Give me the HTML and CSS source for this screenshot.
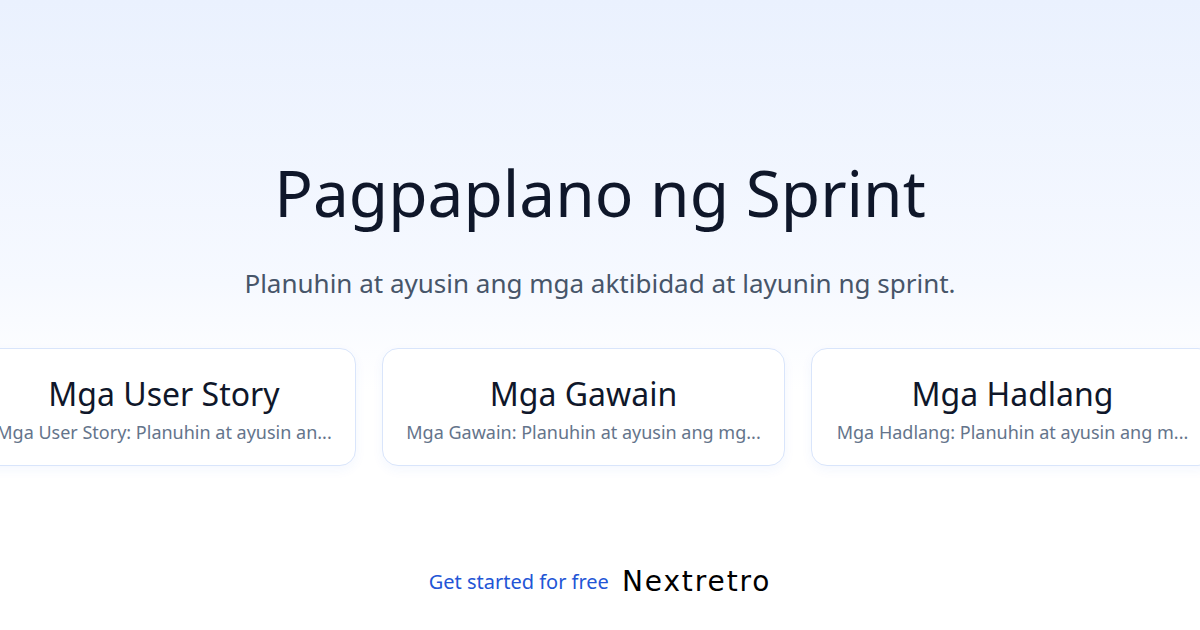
FILE: index.html
```html
<!DOCTYPE html>
<html lang="tl">
<head>
    <meta charset="UTF-8">
    <title>Pagpaplano ng Sprint</title>
    <link rel="stylesheet" href="styles.css">
</head>
<body>
    <div class="page">
        <div class="hero">
            <h1 class="title">Pagpaplano ng Sprint</h1>
            <p class="lead">Planuhin at ayusin ang mga aktibidad at layunin ng sprint.</p>
        </div>

        <div class="cards">
            <div class="card card-first">
                <h2 class="card-title">Mga User Story</h2>
                <p class="card-text">Mga User Story: Planuhin at ayusin an...</p>
            </div>
            <div class="card">
                <h2 class="card-title">Mga Gawain</h2>
                <p class="card-text">Mga Gawain: Planuhin at ayusin ang mg...</p>
            </div>
            <div class="card">
                <h2 class="card-title">Mga Hadlang</h2>
                <p class="card-text">Mga Hadlang: Planuhin at ayusin ang m...</p>
            </div>
        </div>

        <div class="footer">
            <span class="cta">Get started for free</span>
            <span class="brand">Nextretro</span>
        </div>
    </div>
</body>
</html>
```

FILE: styles.css
```css
body{
    margin:0;
    padding:0;
    font-family: "Noto Sans", "Open Sans", sans-serif;
    background-color: #ffffff;
}

.page{
    width:1200px;
    height:630px;
    overflow: hidden;
    background: linear-gradient(180deg, #eaf1fe 0%, #f6f9ff 45%, #ffffff 62%);
    display: flex;
    flex-direction: column;
    align-items: center;
}

.hero{
    padding-top:150px;
    text-align: center;
}
.title{
    margin:0;
    font-size: 64px;
    font-weight: 400;
    line-height: 86px;
    color: #0f172a;
}
.lead{
    margin:30px 0 0;
    font-size: 26px;
    line-height: 34px;
    color: #475569;
}

/* the strip of cards runs past both edges of the page */
.cards{
    align-self: flex-start;
    display: flex;
    gap:26px;
    margin-top:48px;
    margin-left:-28px;
}
.card{
    width:403px;
    height:118px;
    box-sizing: border-box;
    flex-shrink: 0;
    background-color: #ffffff;
    border:1px solid #d9e5fb;
    border-radius: 16px;
    box-shadow: 0 4px 12px rgba(37, 99, 235, 0.05);
    display: flex;
    flex-direction: column;
    align-items: center;
    justify-content: center;
    padding: 3px 10px 0;
}
.card-first{
    width:384px;
}
.card-title{
    margin:0;
    font-size: 32px;
    font-weight: 400;
    line-height: 42px;
    color: #0f172a;
}
.card-text{
    margin:4px 0 0;
    font-size: 18px;
    line-height: 26px;
    color: #64748b;
    text-align: center;
    white-space: nowrap;
}

.footer{
    margin-top:auto;
    margin-bottom:32px;
    display: flex;
    align-items: center;
    gap:13px;
}
.cta{
    font-size: 20px;
    color: #2255d6;
}
.brand{
    font-family: "DejaVu Sans", sans-serif;
    font-size: 28px;
    color: #000000;
    letter-spacing: 1.9px;
}
```
